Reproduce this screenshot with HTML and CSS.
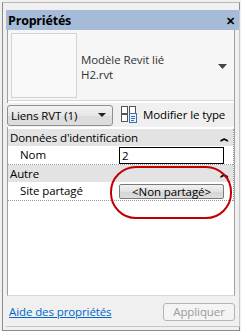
FILE: index.html
```html
<!DOCTYPE html>
<html lang="fr">
<head>
  <meta charset="UTF-8">
  <title>Propriétés</title>
  <link rel="stylesheet" href="styles.css">
</head>
<body>

<div class="frame">
  <div class="palette">
    <div class="title-bar">
      <span class="title">Propriétés</span>
      <span class="close">✕</span>
    </div>
    <div class="palette-body">
      <div class="panel">
        <div class="type-selector">
          <div class="thumb"></div>
          <div class="type-name">
            <div>Modèle Revit lié</div>
            <div>H2.rvt</div>
          </div>
          <svg class="type-arrow" width="9" height="5" viewBox="0 0 9 5"><path d="M0 0h9L4.5 5z" fill="#444"/></svg>
        </div>
        <div class="filter-row">
          <div class="combo">
            <span>Liens RVT (1)</span>
            <svg width="8" height="4" viewBox="0 0 8 4"><path d="M0 0h8L4 4z" fill="#222"/></svg>
          </div>
          <div class="edit-type">
            <svg width="16" height="17" viewBox="0 0 16 17">
              <rect x="0.5" y="0.5" width="6" height="7" fill="#fff" stroke="#555"/>
              <rect x="0.5" y="8.5" width="6" height="7" fill="#fff" stroke="#555"/>
              <rect x="8.5" y="0.5" width="6" height="7" fill="#fff" stroke="#555"/>
              <rect x="8.5" y="7.5" width="7" height="9" fill="#eef3fa" stroke="#3d6fb0"/>
              <path d="M10 10.5h4M10 12.5h4M10 14.5h3" stroke="#3d6fb0"/>
            </svg>
            <span>Modifier le type</span>
          </div>
        </div>
        <div class="grid">
          <div class="group">
            <span>Données d'identification</span>
            <span class="collapse">︽</span>
          </div>
          <div class="prop">
            <div class="prop-name">Nom</div>
            <div class="prop-value"><div class="text-box">2</div></div>
          </div>
          <div class="group">
            <span>Autre</span>
            <span class="collapse">︽</span>
          </div>
          <div class="prop">
            <div class="prop-name">Site partagé</div>
            <div class="prop-value"><div class="grid-button">&lt;Non partagé&gt;</div></div>
          </div>
          <div class="highlight"></div>
        </div>
      </div>
      <div class="footer">
        <a class="help" href="#">Aide des propriétés</a>
        <div class="apply">Appliquer</div>
      </div>
    </div>
  </div>
</div>

</body>
</html>
```

FILE: styles.css
```css
html, body {
  margin: 0;
  height: 100%;
}
body {
  font-family: "Open Sans", "Noto Sans", sans-serif;
  font-size: 11.5px;
  letter-spacing: -0.1px;
  color: #000;
  background-color: #f0f0f0;
  overflow: hidden;
}
.frame {
  box-sizing: border-box;
  height: 329px;
  margin: 2px 1px 0 2px;
  border: 1px solid #8c8c8c;
  border-top-color: #b8b8b8;
  padding: 7px 0 0 3px;
  background: #f0f0f0;
}
.palette {
  width: 233px;
  height: 316px;
  display: flex;
  flex-direction: column;
  border-right: 1px solid #c6c6c6;
  border-bottom: 1px solid #c6c6c6;
}
.title-bar {
  height: 20px;
  background: #a6bbd7;
  display: flex;
  align-items: center;
  justify-content: space-between;
  padding: 0 4px 0 2px;
}
.title {
  font-weight: bold;
  font-size: 12.5px;
  letter-spacing: -0.2px;
}
.close {
  font-size: 11px;
  font-weight: bold;
}
.palette-body {
  flex: 1;
  display: flex;
  flex-direction: column;
  padding: 0 4px 0 1px;
}
.panel {
  flex: 1;
  background: #fff;
  border-left: 1px solid #a0a0a0;
  border-right: 1px solid #a0a0a0;
  border-bottom: 1px solid #d8d8d8;
}
.type-selector {
  height: 70px;
  background: #f6f6f6;
  border-bottom: 1px solid #d6d6d6;
  display: flex;
  align-items: center;
  padding: 0 7px 0 3px;
}
.thumb {
  width: 64px;
  height: 63px;
  border: 1px solid #d4d4d4;
  background: #f9f9f9;
}
.type-name {
  flex: 1;
  margin-left: 4px;
  line-height: 15px;
  color: #333;
  padding-top: 3px;
}
.type-arrow {
  margin-top: 2px;
}
.filter-row {
  display: flex;
  align-items: center;
  height: 24px;
  margin-top: 2px;
  background: #f0f0f0;
  margin-left: -1px;
}
.combo {
  box-sizing: border-box;
  width: 106px;
  height: 21px;
  border: 1px solid #8e8f8f;
  border-radius: 3px;
  background: linear-gradient(#f3f3f3, #e6e6e6 50%, #dcdcdc 51%, #dddddd);
  display: flex;
  align-items: center;
  justify-content: space-between;
  padding: 0 6px 0 3px;
}
.edit-type {
  display: flex;
  align-items: center;
  gap: 6px;
  margin-left: 8px;
  padding-bottom: 2px;
}
.grid {
  position: relative;
  margin-top: 2px;
  border-right: 1px dotted #999;
}
.group {
  height: 17px;
  background: #e3e3e3;
  display: flex;
  align-items: center;
  justify-content: space-between;
  padding: 0 4px 0 2px;
}
.collapse {
  font-size: 9px;
  font-weight: bold;
  line-height: 9px;
}
.prop {
  display: flex;
  height: 18px;
  border-bottom: 1px dotted #999;
}
.prop-name {
  width: 97px;
  padding-left: 12px;
  line-height: 18px;
}
.prop-value {
  flex: 1;
  display: flex;
  align-items: center;
  padding: 0 9px 0 2px;
}
.text-box {
  box-sizing: border-box;
  width: 100%;
  height: 17px;
  border: 1px solid #000;
  line-height: 15px;
  padding-left: 2px;
}
.grid-button {
  box-sizing: border-box;
  width: 100%;
  height: 15px;
  border: 1px solid #7a7a7a;
  border-radius: 2px;
  background: linear-gradient(#f2f2f2, #e2e2e2 50%, #d4d4d4 51%, #dedede);
  text-align: center;
  line-height: 13px;
}
.highlight {
  position: absolute;
  left: 102px;
  top: 37px;
  width: 118px;
  height: 49px;
  border: 2px solid #c00000;
  border-radius: 26px;
}
.footer {
  height: 30px;
  display: flex;
  align-items: center;
  justify-content: space-between;
  padding: 0 0 0 2px;
}
.help {
  color: #0066cc;
  text-decoration: underline;
}
.apply {
  box-sizing: border-box;
  width: 72px;
  height: 18px;
  border: 1px solid #b5b5b5;
  border-radius: 3px;
  background: #f4f4f4;
  color: #9a9a9a;
  text-align: center;
  line-height: 16px;
  margin-top: 2px;
}
```
